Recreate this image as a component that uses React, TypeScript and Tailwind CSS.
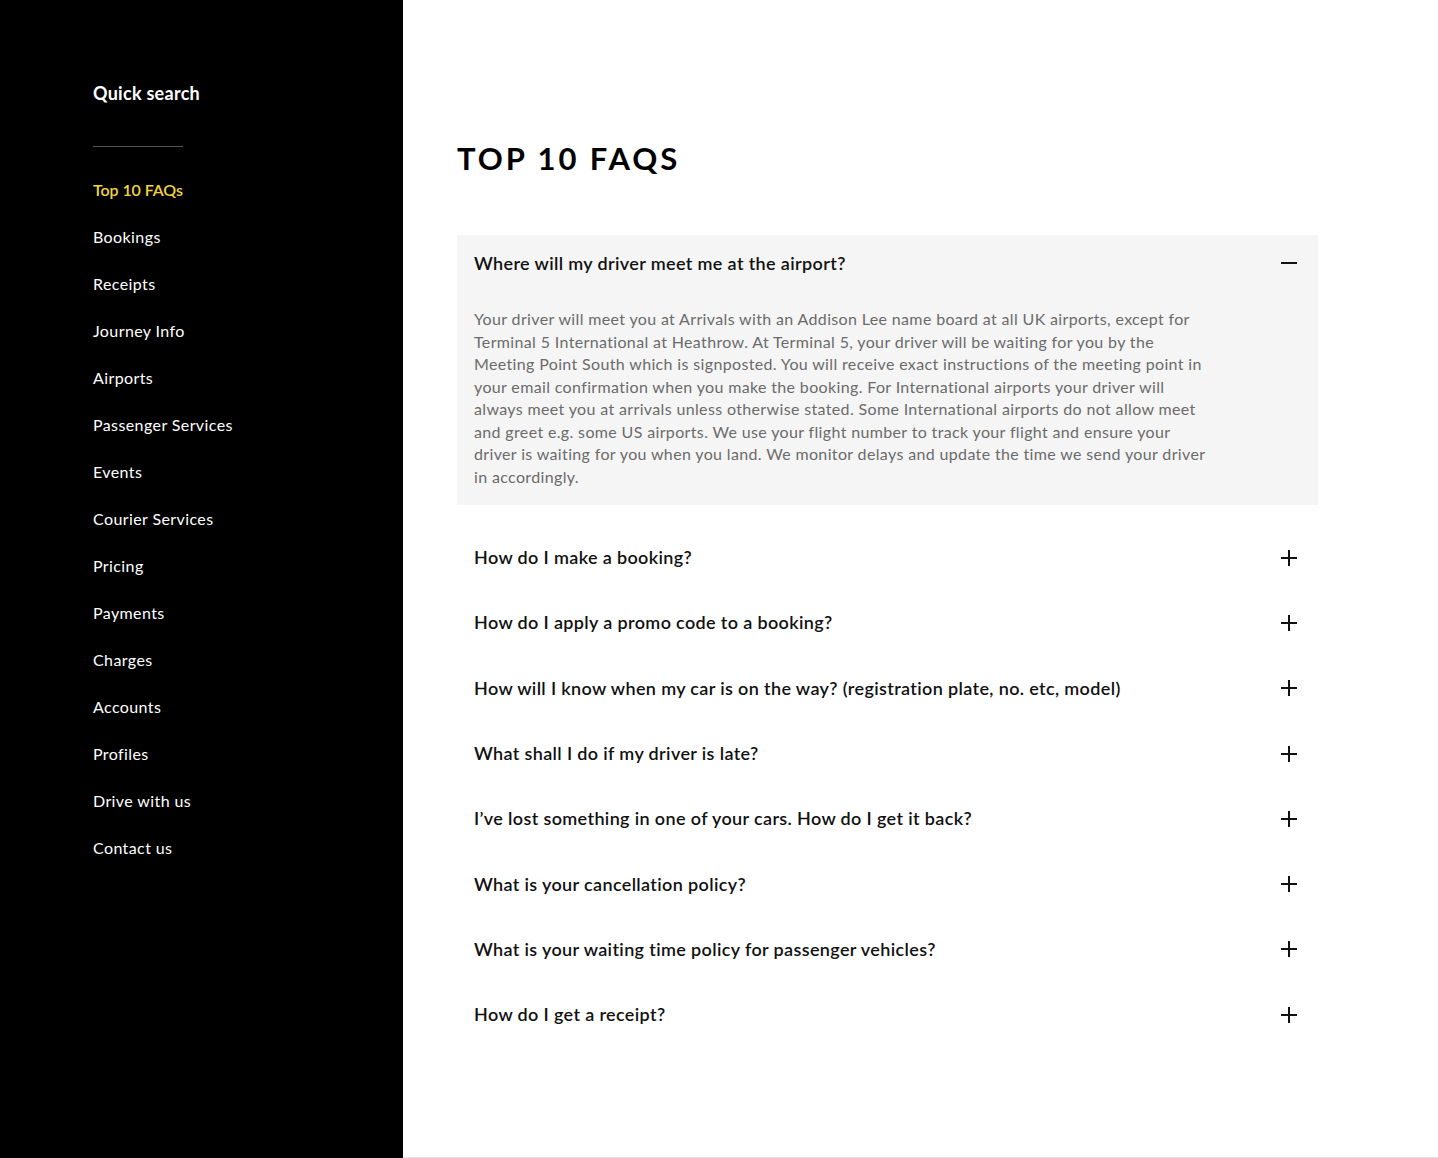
import React from "react";

const nav = [
  "Top 10 FAQs",
  "Bookings",
  "Receipts",
  "Journey Info",
  "Airports",
  "Passenger Services",
  "Events",
  "Courier Services",
  "Pricing",
  "Payments",
  "Charges",
  "Accounts",
  "Profiles",
  "Drive with us",
  "Contact us",
];

const questions = [
  "How do I make a booking?",
  "How do I apply a promo code to a booking?",
  "How will I know when my car is on the way? (registration plate, no. etc, model)",
  "What shall I do if my driver is late?",
  "I\u2019ve lost something in one of your cars. How do I get it back?",
  "What is your cancellation policy?",
  "What is your waiting time policy for passenger vehicles?",
  "How do I get a receipt?",
];

const answerLines = [
  "Your driver will meet you at Arrivals with an Addison Lee name board at all UK airports, except for",
  "Terminal 5 International at Heathrow. At Terminal 5, your driver will be waiting for you by the",
  "Meeting Point South which is signposted. You will receive exact instructions of the meeting point in",
  "your email confirmation when you make the booking. For International airports your driver will",
  "always meet you at arrivals unless otherwise stated. Some International airports do not allow meet",
  "and greet e.g. some US airports. We use your flight number to track your flight and ensure your",
  "driver is waiting for you when you land. We monitor delays and update the time we send your driver",
  "in accordingly.",
];

function Plus() {
  return (
    <svg width="18" height="18" viewBox="0 0 18 18" className="shrink-0">
      <path d="M9 1v16M1 9h16" stroke="#111" strokeWidth="2" fill="none" />
    </svg>
  );
}

function Minus() {
  return (
    <svg width="18" height="18" viewBox="0 0 18 18" className="shrink-0">
      <path d="M1 9h16" stroke="#111" strokeWidth="2" fill="none" />
    </svg>
  );
}

export default function App() {
  return (
    <div
      className="flex h-[1158px] w-full bg-white"
      style={{ fontFamily: "Lato, 'Noto Sans', sans-serif" }}
    >
      <aside className="w-[403px] shrink-0 bg-black pl-[93px] pt-[80px]">
        <div className="text-[18px] font-bold leading-[26px] tracking-[0.015em] text-white">
          Quick search
        </div>
        <div className="mt-[40px] h-px w-[90px] bg-[#555]" />
        <nav className="mt-[31px] flex flex-col">
          {nav.map((n, i) => (
            <div
              key={n}
              className={
                i === 0
                  ? "h-[47px] text-[16px] font-semibold leading-[24px] tracking-[-0.005em] text-[#f3d43c]"
                  : "h-[47px] text-[16px] font-normal leading-[24px] tracking-[0.025em] text-white"
              }
            >
              {n}
            </div>
          ))}
        </nav>
      </aside>
      <main className="flex-1 border-b border-[#e3e3e3] pl-[54px] pr-[120px] pt-[139px]">
        <h1 className="text-[31px] font-bold leading-[38px] tracking-[0.095em] text-black">
          TOP 10 FAQS
        </h1>
        <div className="mt-[58px] w-[861px]">
          <div className="bg-[#f5f5f5] pb-[17px]">
            <div className="flex h-[56px] items-center justify-between pl-[17px] pr-[20px]">
              <span className="text-[18px] font-semibold tracking-[0.02em] text-[#111]">
                Where will my driver meet me at the airport?
              </span>
              <Minus />
            </div>
            <div className="mt-[17px] pl-[17px] text-[16px] leading-[22.5px] tracking-[0.022em] text-[#6b6b6b]">
              {answerLines.map((l, i) => (
                <div key={i} className="whitespace-nowrap">
                  {l}
                </div>
              ))}
            </div>
          </div>
          <div className="mt-[20px] flex flex-col">
            {questions.map((q) => (
              <div
                key={q}
                className="flex h-[65.3px] items-center justify-between pl-[17px] pr-[20px]"
              >
                <span className="text-[18px] font-semibold tracking-[0.02em] text-[#111]">{q}</span>
                <Plus />
              </div>
            ))}
          </div>
        </div>
      </main>
    </div>
  );
}
